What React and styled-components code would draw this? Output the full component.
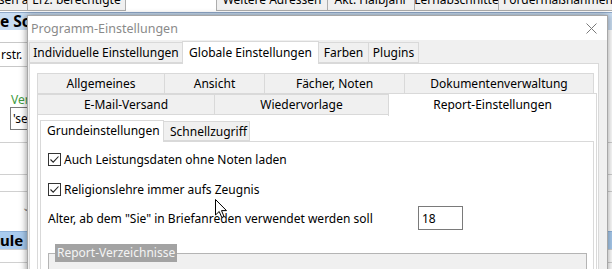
import React from 'react';
import styled, { createGlobalStyle } from 'styled-components';

const GlobalStyle = createGlobalStyle`
  html, body { margin: 0; padding: 0; overflow: hidden; }
  body {
    font-family: "Noto Sans", "Segoe UI", sans-serif;
    font-size: 12px;
    color: #000;
    background: #fff;
  }
`;

const Screen = styled.div`
  position: relative;
  width: 612px;
  height: 269px;
  overflow: hidden;
  background: #fff;
  display: flex;
  flex-direction: column;
`;

/* ---------- background application ---------- */
const Toolbar = styled.div`
  display: flex;
  height: 24px;
  margin-top: -13px;
  flex-shrink: 0;
  width: 800px;
`;

const ToolButton = styled.div`
  flex-shrink: 0;
  box-sizing: border-box;
  width: ${p => p.$w}px;
  margin-left: ${p => p.$ml}px;
  border: 1px solid #adadad;
  background: #f0f0f0;
  display: flex;
  align-items: center;
  justify-content: center;
  white-space: nowrap;
  overflow: hidden;
`;

const HeaderBar = styled.div`
  flex-shrink: 0;
  margin-top: 1px;
  height: 17px;
  border-top: 1px solid #8fa9c9;
  background: #c9ddf2;
  font-weight: bold;
  font-size: 15.5px;
  line-height: 17px;
  white-space: nowrap;
`;

const Spacer = styled.div`
  flex-shrink: 0;
  height: ${p => p.$h}px;
`;

const FieldCell = styled.div`
  flex-shrink: 0;
  height: 23px;
  width: 120px;
  border-top: 1px solid #c8c8c8;
  border-bottom: 1px solid #c8c8c8;
  border-right: 1px solid #c8c8c8;
  display: flex;
  align-items: center;
  padding-left: 1px;
`;

const GreenLabel = styled.div`
  flex-shrink: 0;
  height: 14px;
  line-height: 14px;
  padding-left: 11px;
  color: #3f9b3f;
`;

const SmallInput = styled.div`
  flex-shrink: 0;
  box-sizing: border-box;
  height: 23px;
  width: 120px;
  margin-left: 10px;
  border: 1px solid #7a7a7a;
  padding-left: 2px;
  display: flex;
  align-items: center;
`;

const GridRow = styled.div`
  flex-shrink: 0;
  box-sizing: border-box;
  height: ${p => p.$h}px;
  border-top: 1px solid #d0d0d0;
  display: flex;
  align-items: center;
  justify-content: flex-start;
  padding-left: 22px;
  color: #777;
  font-size: 10px;
`;

const HighlightRow = styled.div`
  flex-shrink: 0;
  box-sizing: border-box;
  height: 18px;
  background: #a9cbee;
  border-top: 1px solid #8fb3db;
  font-weight: bold;
  font-size: 15px;
  line-height: 16px;
  white-space: nowrap;
`;

/* ---------- dialog ---------- */
const Dialog = styled.div`
  position: absolute;
  left: 27px;
  top: 15px;
  width: 581px;
  height: 270px;
  box-sizing: border-box;
  border: 1px solid #a7a7a7;
  box-shadow: -2px 0 6px rgba(0, 0, 0, 0.25), 2px 0 6px rgba(0, 0, 0, 0.2);
  background: #f0f0f0;
  display: flex;
  flex-direction: column;
`;

const TitleBar = styled.div`
  flex-shrink: 0;
  height: 24px;
  background: #fff;
  display: flex;
  align-items: center;
  justify-content: space-between;
  padding: 0 10px 0 3px;
`;

const TitleText = styled.span`
  color: #8a8a8a;
  font-size: 12.5px;
`;

const Client = styled.div`
  flex: 1;
  display: flex;
  flex-direction: column;
  padding: 0 8px 0 1px;
`;

const TabStrip = styled.div`
  display: flex;
  align-items: flex-end;
  flex-shrink: 0;
  height: ${p => p.$h}px;
`;

const Tab = styled.div`
  flex-shrink: 0;
  box-sizing: border-box;
  position: relative;
  width: ${p => p.$w}px;
  height: ${p => (p.$selected ? p.$h + 2 : p.$h)}px;
  margin-right: -1px;
  margin-bottom: ${p => (p.$selected ? -1 : 0)}px;
  margin-top: ${p => (p.$selected ? -2 : 0)}px;
  z-index: ${p => (p.$selected ? 2 : 1)};
  border: 1px solid #d9d9d9;
  border-bottom: ${p => (p.$selected ? 'none' : '1px solid #d9d9d9')};
  background: ${p => (p.$selected ? '#fff' : '#f0f0f0')};
  display: flex;
  align-items: center;
  justify-content: ${p => (p.$left ? 'flex-start' : 'center')};
  padding-left: ${p => (p.$left ? 6 : 0)}px;
  padding-bottom: ${p => (p.$selected ? 2 : 0)}px;
  white-space: nowrap;
`;

const Panel = styled.div`
  flex: 1;
  box-sizing: border-box;
  border: 1px solid #d9d9d9;
  display: flex;
  flex-direction: column;
  padding: ${p => p.$pad};
  background: #fff;
`;

const TabRows = styled.div`
  display: flex;
  flex-direction: column;
  flex-shrink: 0;
  position: relative;
  z-index: 1;
  margin-bottom: -1px;
`;

const TabRow = styled.div`
  display: flex;
  height: 21px;
  align-items: flex-end;
`;

const Content = styled.div`
  flex: 1;
  display: flex;
  flex-direction: column;
  padding: 11px 6px 0 7px;
`;

const CheckRow = styled.label`
  display: flex;
  align-items: center;
  height: 13px;
  margin-bottom: ${p => p.$mb || 0}px;
`;

const CheckBox = styled.span`
  flex-shrink: 0;
  box-sizing: border-box;
  width: 13px;
  height: 13px;
  border: 1px solid #333;
  background: #fff;
  display: flex;
  align-items: center;
  justify-content: center;
  margin-right: 3px;
`;

const FieldRow = styled.div`
  display: flex;
  align-items: center;
  height: 24px;
  margin-top: 10px;
`;

const FieldLabel = styled.span`
  width: 370px;
  flex-shrink: 0;
`;

const NumberBox = styled.div`
  box-sizing: border-box;
  width: 45px;
  height: 24px;
  border: 1px solid #7a7a7a;
  display: flex;
  align-items: center;
  padding-left: 3px;
`;

const GroupBox = styled.fieldset`
  margin: 14px 0 0 0;
  padding: 0;
  min-width: 0;
  height: 40px;
  border: 1px solid #b4b4b4;
  background: #f0f0f0;
`;

const GroupLegend = styled.legend`
  margin-left: 6px;
  padding: 0 2px;
  height: 18px;
  line-height: 18px;
  background: #a3a3a3;
  color: #f4f4f4;
`;

const Cursor = styled.svg`
  position: absolute;
  left: 215px;
  top: 199px;
  z-index: 10;
`;

const CheckIcon = () => (
  <svg width="11" height="11" viewBox="0 0 11 11">
    <path d="M1.5 5.5 L4.2 8.2 L9.5 2.5" fill="none" stroke="#222" strokeWidth="1.1" />
  </svg>
);

const CloseIcon = () => (
  <svg width="11" height="11" viewBox="0 0 11 11">
    <path d="M0.5 0.5 L10.5 10.5 M10.5 0.5 L0.5 10.5" stroke="#7a7a7a" strokeWidth="1" />
  </svg>
);

const toolButtons = [
  { t: 'Adressen ä', w: 61, ml: -33 },
  { t: 'Erz. berechtigte', w: 99, ml: -1 },
  { t: 'Weitere Adressen', w: 112, ml: 90 },
  { t: 'Akt. Halbjahr', w: 88, ml: -1 },
  { t: 'Lernabschnitte', w: 85, ml: -1 },
  { t: 'Fördermaßnahmen', w: 120, ml: -1 },
];

const outerTabs = [
  { t: 'Individuelle Einstellungen', w: 154 },
  { t: 'Globale Einstellungen', w: 137, sel: true },
  { t: 'Farben', w: 51 },
  { t: 'Plugins', w: 51 },
];

const row1 = [
  { t: 'Allgemeines', w: 128 },
  { t: 'Ansicht', w: 101 },
  { t: 'Fächer, Noten', w: 141 },
  { t: 'Dokumentenverwaltung', w: 190 },
];

const row2 = [
  { t: 'E-Mail-Versand', w: 178 },
  { t: 'Wiedervorlage', w: 175 },
  { t: 'Report-Einstellungen', w: 209, sel: true },
];

export default function App() {
  return (
    <>
      <GlobalStyle />
      <Screen>
        <Toolbar>
          {toolButtons.map(b => (
            <ToolButton key={b.t} $w={b.w} $ml={b.ml}>{b.t}</ToolButton>
          ))}
        </Toolbar>
        <HeaderBar>e Sc</HeaderBar>
        <Spacer $h={12} />
        <FieldCell>rstr.</FieldCell>
        <Spacer $h={26} />
        <GreenLabel>Ver</GreenLabel>
        <SmallInput>'se</SmallInput>
        <Spacer $h={12} />
        <GridRow $h={32} />
        <GridRow $h={17} />
        <GridRow $h={30}>⌄</GridRow>
        <Spacer $h={10} />
        <HighlightRow>ule</HighlightRow>
        <GridRow $h={13} />
        <GridRow $h={10} />

        <Dialog>
          <TitleBar>
            <TitleText>Programm-Einstellungen</TitleText>
            <CloseIcon />
          </TitleBar>
          <Client>
            <TabStrip $h={23}>
              {outerTabs.map(t => (
                <Tab key={t.t} $w={t.w} $h={21} $selected={t.sel}>{t.t}</Tab>
              ))}
            </TabStrip>
            <Panel $pad="9px 1px 0 7px">
              <TabRows>
                <TabRow>
                  {row1.map(t => (
                    <Tab key={t.t} $w={t.w} $h={21}>{t.t}</Tab>
                  ))}
                </TabRow>
                <TabRow>
                  {row2.map(t => (
                    <Tab key={t.t} $w={t.w} $h={21} $selected={t.sel}>{t.t}</Tab>
                  ))}
                </TabRow>
              </TabRows>
              <Panel $pad="2px 2px 0 2px">
                <TabStrip $h={24}>
                  <Tab $w={124} $h={20} $selected $left>Grundeinstellungen</Tab>
                  <Tab $w={87} $h={20} $left>Schnellzugriff</Tab>
                </TabStrip>
                <Panel $pad="0">
                  <Content>
                    <CheckRow $mb={17}>
                      <CheckBox><CheckIcon /></CheckBox>
                      Auch Leistungsdaten ohne Noten laden
                    </CheckRow>
                    <CheckRow>
                      <CheckBox><CheckIcon /></CheckBox>
                      Religionslehre immer aufs Zeugnis
                    </CheckRow>
                    <FieldRow>
                      <FieldLabel>Alter, ab dem "Sie" in Briefanreden verwendet werden soll</FieldLabel>
                      <NumberBox>18</NumberBox>
                    </FieldRow>
                    <GroupBox>
                      <GroupLegend>Report-Verzeichnisse</GroupLegend>
                    </GroupBox>
                  </Content>
                </Panel>
              </Panel>
            </Panel>
          </Client>
        </Dialog>
        <Cursor width="13" height="20" viewBox="0 0 13 20">
          <path d="M0.5 0.5 L0.5 16 L4.2 12.5 L6.8 18.5 L9 17.5 L6.5 11.6 L11.5 11.6 Z" fill="#fff" stroke="#000" strokeWidth="1" />
        </Cursor>
      </Screen>
    </>
  );
}
